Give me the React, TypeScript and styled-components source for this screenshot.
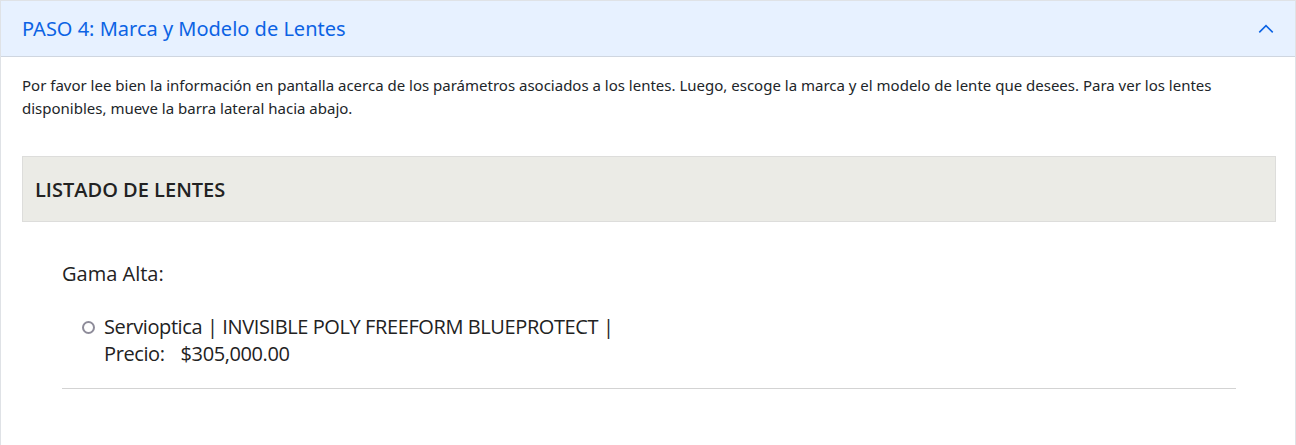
import React from "react";
import styled, { createGlobalStyle } from "styled-components";

const Global = createGlobalStyle`
  html, body { margin: 0; padding: 0; background: #fff; }
  body { font-family: "Noto Sans", "Open Sans", sans-serif; color: #212529; }
  * { box-sizing: border-box; }
`;

const Accordion = styled.div`
  border: 1px solid #dfe2e6;
  border-bottom: none;
  width: 1296px;
  min-height: 445px;
`;

const Header = styled.button`
  all: unset;
  box-sizing: border-box;
  display: flex;
  align-items: center;
  justify-content: space-between;
  width: 100%;
  height: 56px;
  padding: 0 20px 0 21px;
  background: #e7f1ff;
  border-bottom: 1px solid #cfd6e0;
  color: #0c63e4;
  font-family: "Noto Sans", sans-serif;
  font-size: 20px;
  cursor: pointer;
`;

const Body = styled.div`
  padding: 17px 19px 0 21px;
`;

const Intro = styled.p`
  margin: 0;
  font-size: 15px;
  line-height: 23px;
  color: #212529;
`;

const ListPanel = styled.div`
  margin-top: 36px;
  height: 66px;
  display: flex;
  align-items: center;
  padding: 0 12px;
  background: #ebebe6;
  border: 1px solid #dddddb;
  font-family: "Open Sans", sans-serif;
  font-weight: 600;
  font-size: 20px;
  color: #222;
`;

const Group = styled.div`
  padding: 39px 40px 0 40px;
`;

const GroupTitle = styled.div`
  font-family: "Open Sans", sans-serif;
  font-size: 20px;
  color: #222;
  line-height: 26px;
`;

const Option = styled.label`
  display: flex;
  align-items: flex-start;
  gap: 9px;
  margin-top: 26px;
  padding-left: 20px;
  font-family: "Open Sans", sans-serif;
  font-size: 20px;
  letter-spacing: -0.4px;
  line-height: 27px;
  color: #222;
`;

const Radio = styled.span`
  flex: none;
  width: 13px;
  height: 13px;
  margin-top: 8px;
  border: 2px solid #8e8c9a;
  border-radius: 50%;
`;

const OptionText = styled.span`
  display: block;
`;

const Price = styled.span`
  display: inline-block;
  margin-right: 16px;
`;

const Rule = styled.hr`
  margin: 21px 0 0;
  border: none;
  border-top: 1px solid #d3d3d3;
`;

export default function App() {
  return (
    <>
      <Global />
      <Accordion>
        <Header>
          <span>PASO 4: Marca y Modelo de Lentes</span>
          <svg width="18" height="18" viewBox="0 0 16 16" fill="none">
            <path d="M2 11 L8 5 L14 11" stroke="#0c63e4" strokeWidth="1.4" />
          </svg>
        </Header>
        <Body>
          <Intro>
            Por favor lee bien la información en pantalla acerca de los parámetros asociados a los lentes. Luego, escoge la marca y el modelo de lente que desees. Para ver los lentes disponibles, mueve la barra lateral hacia abajo.
          </Intro>
          <ListPanel>LISTADO DE LENTES</ListPanel>
          <Group>
            <GroupTitle>Gama Alta:</GroupTitle>
            <Option>
              <Radio />
              <OptionText>
                Servioptica | INVISIBLE POLY FREEFORM BLUEPROTECT |
                <br />
                <Price>Precio:</Price>$305,000.00
              </OptionText>
            </Option>
            <Rule />
          </Group>
        </Body>
      </Accordion>
    </>
  );
}
